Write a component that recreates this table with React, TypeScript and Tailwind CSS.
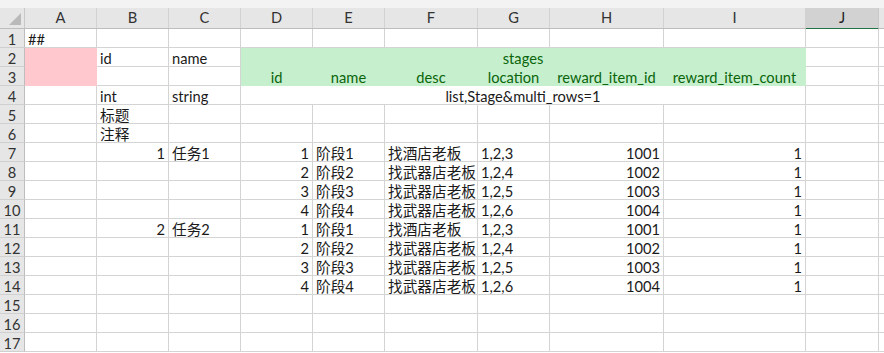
import React from "react";

type Align = "left" | "right" | "center";

interface CellSpec {
  w: string;
  text?: string;
  align?: Align;
  fill?: "pink" | "green";
  green?: boolean;
}

const FONT = "font-['Lato','Noto_Sans_CJK_SC',sans-serif]";

const COLW = {
  A: "w-[72px]",
  B: "w-[72px]",
  C: "w-[72px]",
  D: "w-[72px]",
  E: "w-[72px]",
  F: "w-[93px]",
  G: "w-[72px]",
  H: "w-[114px]",
  I: "w-[142px]",
  J: "w-[73px]",
  DI: "w-[565px]",
};

const LETTERS: { key: keyof typeof COLW; label: string }[] = [
  { key: "A", label: "A" },
  { key: "B", label: "B" },
  { key: "C", label: "C" },
  { key: "D", label: "D" },
  { key: "E", label: "E" },
  { key: "F", label: "F" },
  { key: "G", label: "G" },
  { key: "H", label: "H" },
  { key: "I", label: "I" },
];

function Cell({ w, text, align = "left", fill, green }: CellSpec) {
  const justify =
    align === "right" ? "justify-end" : align === "center" ? "justify-center" : "justify-start";
  const bg =
    fill === "pink"
      ? "bg-[#ffc7ce] border-[#ffc7ce]"
      : fill === "green"
      ? "bg-[#c6efce] border-[#c6efce]"
      : "bg-white border-[#d4d4d4]";
  const color = green ? "text-[#0a650a]" : "text-[#1a1a1a]";
  return (
    <div
      className={`${w} ${bg} ${justify} ${color} shrink-0 h-full border-r border-b flex items-end px-[3px] whitespace-nowrap overflow-visible`}
    >
      <span className="leading-[15px]">{text ?? ""}</span>
    </div>
  );
}

function RowHead({ n }: { n: number }) {
  return (
    <div className="w-[25px] shrink-0 h-full bg-[#e6e6e6] border-r border-b border-r-[#bdbdbd] border-b-[#d0d0d0] flex items-end justify-center text-[#333]">
      <span className="leading-[15px]">{n}</span>
    </div>
  );
}

function Row({ n, cells }: { n: number; cells: CellSpec[] }) {
  return (
    <div className="flex h-[19px]">
      <RowHead n={n} />
      {cells.map((c, i) => (
        <Cell key={i} {...c} />
      ))}
      <Cell w={COLW.J} />
      <Cell w="w-[20px]" />
    </div>
  );
}

const blankRow = (): CellSpec[] => [
  { w: COLW.A },
  { w: COLW.B },
  { w: COLW.C },
  { w: COLW.D },
  { w: COLW.E },
  { w: COLW.F },
  { w: COLW.G },
  { w: COLW.H },
  { w: COLW.I },
];

const stageRow = (
  taskId: string,
  taskName: string,
  stage: string,
  desc: string,
  loc: string,
  item: string
): CellSpec[] => [
  { w: COLW.A },
  { w: COLW.B, text: taskId, align: "right" },
  { w: COLW.C, text: taskName },
  { w: COLW.D, text: stage, align: "right" },
  { w: COLW.E, text: `阶段${stage}` },
  { w: COLW.F, text: desc },
  { w: COLW.G, text: loc },
  { w: COLW.H, text: item, align: "right" },
  { w: COLW.I, text: "1", align: "right" },
];

const rows: CellSpec[][] = [
  [
    { w: COLW.A, text: "##" },
    { w: COLW.B },
    { w: COLW.C },
    { w: COLW.D },
    { w: COLW.E },
    { w: COLW.F },
    { w: COLW.G },
    { w: COLW.H },
    { w: COLW.I },
  ],
  [
    { w: COLW.A, fill: "pink" },
    { w: COLW.B, text: "id" },
    { w: COLW.C, text: "name" },
    { w: COLW.DI, text: "stages", align: "center", fill: "green", green: true },
  ],
  [
    { w: COLW.A, fill: "pink" },
    { w: COLW.B },
    { w: COLW.C },
    { w: COLW.D, text: "id", align: "center", fill: "green", green: true },
    { w: COLW.E, text: "name", align: "center", fill: "green", green: true },
    { w: COLW.F, text: "desc", align: "center", fill: "green", green: true },
    { w: COLW.G, text: "location", align: "center", fill: "green", green: true },
    { w: COLW.H, text: "reward_item_id", align: "center", fill: "green", green: true },
    { w: COLW.I, text: "reward_item_count", align: "center", fill: "green", green: true },
  ],
  [
    { w: COLW.A },
    { w: COLW.B, text: "int" },
    { w: COLW.C, text: "string" },
    { w: COLW.DI, text: "list,Stage&multi_rows=1", align: "center" },
  ],
  [
    { w: COLW.A },
    { w: COLW.B, text: "标题" },
    { w: COLW.C },
    { w: COLW.D },
    { w: COLW.E },
    { w: COLW.F },
    { w: COLW.G },
    { w: COLW.H },
    { w: COLW.I },
  ],
  [
    { w: COLW.A },
    { w: COLW.B, text: "注释" },
    { w: COLW.C },
    { w: COLW.D },
    { w: COLW.E },
    { w: COLW.F },
    { w: COLW.G },
    { w: COLW.H },
    { w: COLW.I },
  ],
  stageRow("1", "任务1", "1", "找酒店老板", "1,2,3", "1001"),
  stageRow("", "", "2", "找武器店老板", "1,2,4", "1002"),
  stageRow("", "", "3", "找武器店老板", "1,2,5", "1003"),
  stageRow("", "", "4", "找武器店老板", "1,2,6", "1004"),
  stageRow("2", "任务2", "1", "找酒店老板", "1,2,3", "1001"),
  stageRow("", "", "2", "找武器店老板", "1,2,4", "1002"),
  stageRow("", "", "3", "找武器店老板", "1,2,5", "1003"),
  stageRow("", "", "4", "找武器店老板", "1,2,6", "1004"),
  blankRow(),
  blankRow(),
  blankRow(),
];

export default function App() {
  return (
    <div className={`w-[884px] h-[353px] overflow-hidden bg-white text-[14.67px] ${FONT}`}>
      {/* strip above the column headers */}
      <div className="h-[8px] bg-[#f3f3f3]" />
      {/* column letters */}
      <div className="flex h-[21px] bg-[#e6e6e6] border-b border-[#bdbdbd]">
        <div className="w-[25px] shrink-0 h-full border-r border-[#c8c8c8] relative">
          <svg className="absolute right-[3px] bottom-[3px]" width="12" height="12" viewBox="0 0 12 12">
            <polygon points="12,0 12,12 0,12" fill="#b9b9b9" />
          </svg>
        </div>
        {LETTERS.map((l) => (
          <div
            key={l.label}
            className={`${COLW[l.key]} shrink-0 h-full border-r border-[#d2d2d2] flex items-center justify-center text-[#333]`}
          >
            {l.label}
          </div>
        ))}
        <div className="w-[73px] shrink-0 h-[22px] bg-[#d2d2d2] border-r border-[#c8c8c8] border-b-2 border-b-[#217346] flex items-center justify-center text-[#222]">
          J
        </div>
        <div className="flex-1" />
      </div>
      {rows.map((cells, i) => (
        <Row key={i} n={i + 1} cells={cells} />
      ))}
    </div>
  );
}
